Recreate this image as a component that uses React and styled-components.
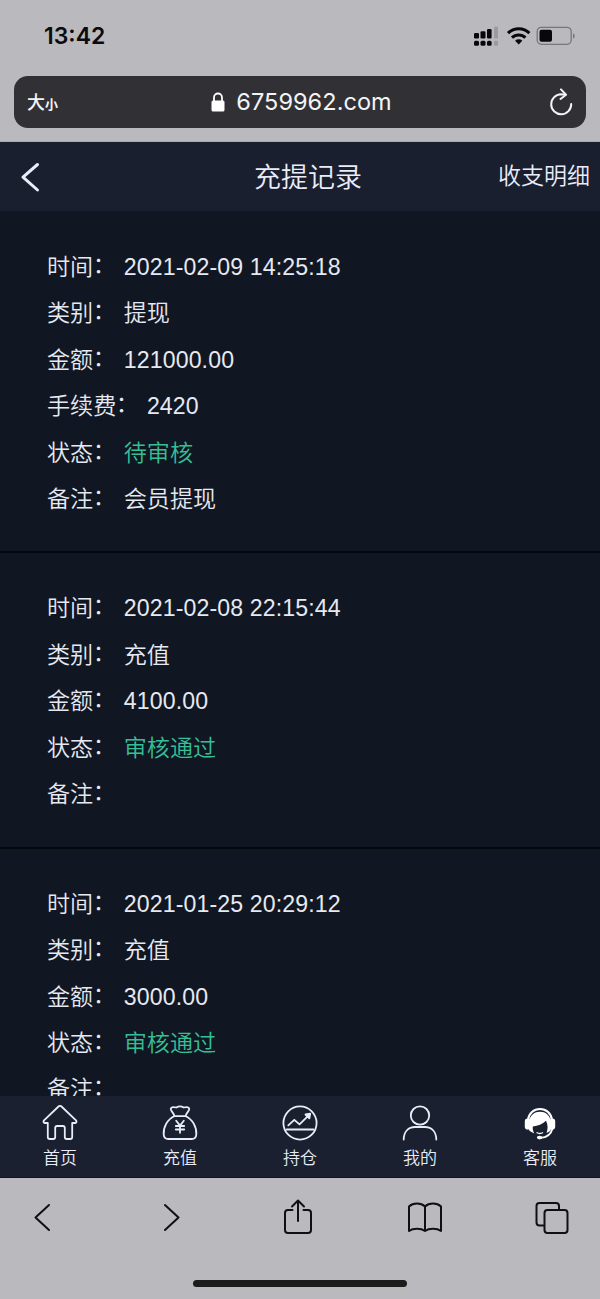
import React from "react"
import styled, { createGlobalStyle } from "styled-components";

const GlobalStyle = createGlobalStyle`
  * {
    box-sizing: border-box;
  }
  body {
    margin: 0;
    background: #bab9be;
    font-family: "Liberation Sans", "Noto Sans CJK SC", sans-serif;
  }
  svg {
    display: block;
    flex: none;
  }
`;

const Screen = styled.div`
  width: 600px;
  height: 1299px;
  display: flex;
  flex-direction: column;
  overflow: hidden;
  background: #bab9be;
`;

const StatusBar = styled.div`
  flex: none;
  height: 76px;
  display: flex;
  align-items: flex-start;
  justify-content: space-between;
  padding: 22px 24px 0 44px;
`;

const Clock = styled.div`
  font: 600 23px/29px Inter, sans-serif;
  letter-spacing: 0;
  color: #0b0b0d;
`;

const AddressArea = styled.div`
  flex: none;
  height: 66px;
  padding: 0 14px;
  border-bottom: 1px solid #a9a9b6;
`;

const AddressBar = styled.div`
  height: 52px;
  display: grid;
  grid-template-columns: 60px 1fr 60px;
  align-items: center;
  padding: 0 12px 0 13px;
  border-radius: 14px;
  background: #313035;
  color: #f4f4f6;
`;

const TextSize = styled.div`
  display: flex;
  align-items: baseline;
  font: 500 18px/26px "Noto Sans CJK SC", sans-serif;
  small {
    font-size: 13px;
    font-weight: 700;
  }
`;

const Url = styled.div`
  display: flex;
  align-items: center;
  justify-content: center;
  gap: 11px;
  padding-left: 2px;
  font: 400 23.5px/30px Inter, sans-serif;
  letter-spacing: 0.05px;
`;

const Reload = styled.div`
  display: flex;
  justify-content: flex-end;
`;

const PageHeader = styled.header`
  flex: none;
  height: 69px;
  display: grid;
  grid-template-columns: 150px 1fr 150px;
  align-items: center;
  padding: 0 10px 0 15px;
  background: #1a1f2f;
  color: #e9edf8;
`;

const Title = styled.h1`
  margin: 0;
  padding: 3px 0 0 11px;
  text-align: center;
  font-size: 27px;
  line-height: 40px;
  font-weight: 350;
`;

const HeaderLink = styled.div`
  text-align: right;
  font-size: 23px;
  line-height: 34px;
  font-weight: 350;
  padding-bottom: 1px;
`;

const RecordList = styled.main`
  flex: 1;
  min-height: 0;
  padding-top: 1px;
  overflow: hidden;
  background: #111722;
`;

const Record = styled.section`
  padding: 32px 47px 29.5px;
  border-bottom: 2px solid #03060d;
  &:first-child {
    padding-bottom: 29px;
  }
`;

const Field = styled.div`
  display: flex;
  gap: 7.5px;
  height: 46.4px;
  font-size: 23.1px;
  line-height: 46.4px;
  font-weight: 350;
  white-space: nowrap;
  color: #e6e9f2;
`;

const Colon = styled.span`
  position: relative;
  top: -2px;
  left: -0.5px;
`;

const Value = styled.span`
  letter-spacing: ${(props) => (props.$latin ? "0.13px" : "0")};
  color: ${(props) => (props.$status ? "#36bf97" : "inherit")};
`;

const TabBar = styled.nav`
  flex: none;
  height: 82px;
  display: grid;
  grid-template-columns: repeat(5, 1fr);
  background: #1a2030;
  border-bottom: 1px solid #12121f;
`;

const Tab = styled.div`
  display: flex;
  flex-direction: column;
  align-items: center;
  gap: 5px;
  padding-top: 9px;
  font-size: 17px;
  line-height: 26px;
  font-weight: 350;
  color: #e9edf8;
`;

const Toolbar = styled.div`
  flex: none;
  height: 102px;
  display: flex;
  align-items: flex-start;
  justify-content: space-between;
  padding: 21px 30px 0 24px;
  color: #101014;
`;

const HomeIndicator = styled.div`
  flex: none;
  width: 214px;
  height: 7px;
  margin: 0 auto 12px;
  border-radius: 4px;
  background: #1c1c1c;
`;

const Line = ({ size = 36, width = 1.8, children }) => (
  <svg
    width={size}
    height={size}
    viewBox={`0 0 ${size} ${size}`}
    fill="none"
    stroke="currentColor"
    strokeWidth={width}
    strokeLinecap="round"
    strokeLinejoin="round"
  >
    {children}
  </svg>
);

const StatusIcons = () => (
  <svg width="104" height="28" viewBox="0 0 104 28">
    <g fill="#08080a">
      <rect x="2" y="11" width="5" height="5.5" rx="1.2" />
      <rect x="8.5" y="9.3" width="5" height="7.2" rx="1.2" />
      <rect x="15" y="7" width="4.6" height="9.5" rx="1.2" />
      <rect x="2" y="18.7" width="5" height="5" rx="1.5" />
      <rect x="8.5" y="18.7" width="5" height="5" rx="1.5" />
      <rect x="15" y="18.7" width="4.6" height="5" rx="1.5" />
      <rect x="67.5" y="7.8" width="12.5" height="12" rx="2" />
    </g>
    <rect x="22" y="4.8" width="4" height="11.7" rx="1" fill="#9b9a9f" />
    <rect x="22" y="18.7" width="4" height="5" rx="1.2" fill="#9b9a9f" />
    <g fill="none" stroke="#08080a" strokeWidth="3.1">
      <path d="M36 11.2a15.2 15.2 0 0 1 21.4 0" />
      <path d="M40 15.7a9.6 9.6 0 0 1 13.4 0" />
    </g>
    <path d="M43.1 18.8a5.2 5.2 0 0 1 7.2 0l-3.6 3.7z" fill="#08080a" />
    <rect x="65.2" y="5.3" width="34" height="17" rx="4.2" fill="none" stroke="#77767a" strokeWidth="1.3" />
    <path d="M101 11.2c2.2.7 2.2 4.7 0 5.4z" fill="#77767a" />
  </svg>
);

const LockIcon = () => (
  <svg width="14" height="20" viewBox="0 0 14 20">
    <rect x="0.5" y="8.5" width="13" height="11" rx="1.5" fill="#fff" />
    <path d="M3 9V5.5a4 4 0 0 1 8 0V9" fill="none" stroke="#fff" strokeWidth="1.8" />
  </svg>
);

const ReloadIcon = () => (
  <Line size={28} width={2}>
    <path d="M19.5 6.700L15 6.300A10 10 0 1 0 25.200 16" />
    <path d="M15 1.400l5 5.300-5.500 4.300" />
  </Line>
);

const HomeIcon = () => (
  <Line>
    <path d="M16.5 1.5Q18 .3 19.5 1.5L34 15.3Q35.3 17.6 33 18h-2.800v14q0 2-2 2h-3.400q-2 0-2-2V23q0-2-2-2h-5.600q-2 0-2 2v9q0 2-2 2H7.800q-2 0-2-2V18H3Q.7 17.600 2 15.300z" />
  </Line>
);

const MoneyBagIcon = () => (
  <Line>
    <path d="M12.300 11.200C11.800 7.500 8.300 6 8.800 3.600 9.500 1.300 12 1.900 14.400 2.500c2.400-1.600 4.800-1.600 7.200 0 2.400-.6 4.900-1.200 5.600 1.100.5 2.400-3 3.900-3.500 7.600" />
    <path d="M12.300 11.200C5.500 14.200 1.200 22 1.700 29.500q.3 4.500 4.600 4.500h23.400q4.300 0 4.600-4.500C34.800 22 30.500 14.200 23.700 11.200z" />
    <path d="M14.200 15.800l3.800 4.800 3.800-4.800M18 20.600v7.200M13.800 21h8.400M13.800 24.500h8.400" />
  </Line>
);

const ChartIcon = () => (
  <Line>
    <circle cx="18" cy="18" r="16.6" />
    <path d="M6.300 20.400l6-5.600 5.200 4.600 9.700-9.600M4.500 24.500h27" />
    <path d="M23.500 9.500l4.700-.8-.8 4.700z" fill="currentColor" />
  </Line>
);

const UserIcon = () => (
  <Line>
    <circle cx="18" cy="10.5" r="9.2" />
    <path d="M1.700 34.500c.2-8 4.700-12.500 11.300-12.500h10c6.600 0 11.100 4.500 11.300 12.500" />
  </Line>
);

const ServiceIcon = () => (
  <svg width="36" height="36" viewBox="0 0 36 36">
    <path d="M6 15C6.800 8.300 11.800 4 18 4s11.200 4.300 12 11" fill="none" stroke="#fff" strokeWidth="2.2" />
    <path
      d="M7.700 26C5 21 6.300 6.800 18 6.800S31 21 28.300 26l-3.800 2c1.600-4 1.500-8-.5-12.200-3.600 3.600-8 5.300-13.200 5.600-.3 2.500.2 4.700 1.500 7z"
      fill="#fff"
    />
    <rect x="2.8" y="13.6" width="5.6" height="11" rx="2.8" fill="#fff" />
    <rect x="27.6" y="13.6" width="5.6" height="11" rx="2.8" fill="#fff" />
    <path d="M30.500 23.500C29 29.500 24.500 32.500 18.500 32.800" fill="none" stroke="#fff" strokeWidth="1.8" />
    <ellipse cx="17.6" cy="32.6" rx="2.8" ry="1.8" fill="#fff" />
    <path d="M14.500 27.500q3.500 2 6.500 0" fill="none" stroke="#fff" strokeWidth="1.3" />
  </svg>
);

const records = [
  [
    ["时间", "2021-02-09 14:25:18"],
    ["类别", "提现"],
    ["金额", "121000.00"],
    ["手续费", "2420"],
    ["状态", "待审核"],
    ["备注", "会员提现"],
  ],
  [
    ["时间", "2021-02-08 22:15:44"],
    ["类别", "充值"],
    ["金额", "4100.00"],
    ["状态", "审核通过"],
    ["备注", ""],
  ],
  [
    ["时间", "2021-01-25 20:29:12"],
    ["类别", "充值"],
    ["金额", "3000.00"],
    ["状态", "审核通过"],
    ["备注", ""],
  ],
];

const tabs = [
  { label: "首页", Icon: HomeIcon },
  { label: "充值", Icon: MoneyBagIcon },
  { label: "持仓", Icon: ChartIcon },
  { label: "我的", Icon: UserIcon },
  { label: "客服", Icon: ServiceIcon },
];

export default function App() {
  return (
    <>
      <GlobalStyle />
      <Screen lang="zh-CN">
        <StatusBar>
          <Clock>13:42</Clock>
          <StatusIcons />
        </StatusBar>
        <AddressArea>
          <AddressBar>
            <TextSize>大<small>小</small></TextSize>
            <Url>
              <LockIcon />
              <span>6759962.com</span>
            </Url>
            <Reload>
              <ReloadIcon />
            </Reload>
          </AddressBar>
        </AddressArea>

        <PageHeader>
          <Line size={32} width={3}>
            <path d="M22.5 3.500L8 16.200l14.500 12.800" />
          </Line>
          <Title>充提记录</Title>
          <HeaderLink>收支明细</HeaderLink>
        </PageHeader>

        <RecordList>
          {records.map((fields, index) => (
            <Record key={index}>
              {fields.map(([label, value]) => (
                <Field key={label}>
                  <span>{label}<Colon>：</Colon></span>
                  <Value $latin={/^\d/.test(value)} $status={label === "状态"}>
                    {value}
                  </Value>
                </Field>
              ))}
            </Record>
          ))}
        </RecordList>

        <TabBar>
          {tabs.map(({ label, Icon }) => (
            <Tab key={label}>
              <Icon />
              {label}
            </Tab>
          ))}
        </TabBar>

        <Toolbar>
          <Line width={2}>
            <path d="M25 6L11.500 18.500 25 31" />
          </Line>
          <Line width={2}>
            <path d="M13 6l13.500 12.500L13 31" />
          </Line>
          <Line width={2}>
            <path d="M13.500 11H9q-3 0-3 3v17q0 3 3 3h20q3 0 3-3V14q0-3-3-3h-4.500M19 22V2M13 7.500L19 1.500l6 6" />
          </Line>
          <Line width={2}>
            <path d="M18 7.500C14 3.500 6 3.500 2 7.500V32c4-3 12-3 16 0 4-3 12-3 16 0V7.500C30 3.500 22 3.500 18 7.500zV32" />
          </Line>
          <Line width={2}>
            <path d="M9.500 26.500H5.500q-3 0-3-3V7q0-3 3-3H22q3 0 3 3v4" />
            <rect x="10.5" y="11" width="23" height="23" rx="3" />
          </Line>
        </Toolbar>
        <HomeIndicator />
      </Screen>
    </>
  )
}
